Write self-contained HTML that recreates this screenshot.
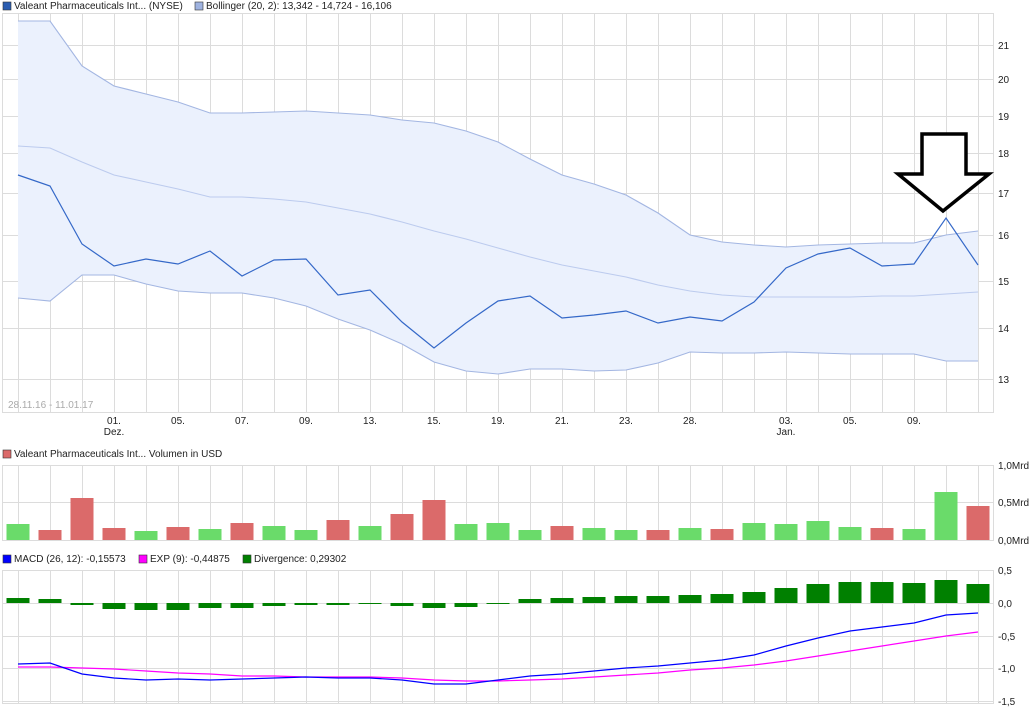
<!DOCTYPE html>
<html><head><meta charset="utf-8"><style>
html,body{margin:0;padding:0;background:#fff;width:1034px;height:712px;overflow:hidden}
svg{display:block;font-family:"Liberation Sans",sans-serif}
</style></head><body>
<svg id="s" width="1034" height="712" viewBox="0 0 1034 712" xmlns="http://www.w3.org/2000/svg">
<g font-size="10" fill="#222">
<rect x="3" y="2" width="8" height="8" fill="#2a5cb0" stroke="#333" stroke-width="0.6"/>
<text x="14" y="9">Valeant Pharmaceuticals Int... (NYSE)</text>
<rect x="195" y="2" width="8" height="8" fill="#9fb3e0" stroke="#333" stroke-width="0.6"/>
<text x="206" y="9">Bollinger (20, 2): 13,342 - 14,724 - 16,106</text>
<rect x="3" y="450" width="8" height="8" fill="#db6a6a" stroke="#333" stroke-width="0.6"/>
<text x="14" y="457">Valeant Pharmaceuticals Int... Volumen in USD</text>
<rect x="3" y="555" width="8" height="8" fill="#0000ff" stroke="#333" stroke-width="0.6"/>
<text x="14" y="562">MACD (26, 12): -0,15573</text>
<rect x="139" y="555" width="8" height="8" fill="#ff00ff" stroke="#333" stroke-width="0.6"/>
<text x="150" y="562">EXP (9): -0,44875</text>
<rect x="243" y="555" width="8" height="8" fill="#008000" stroke="#333" stroke-width="0.6"/>
<text x="254" y="562">Divergence: 0,29302</text>
</g>
<g id="grid" stroke="#dcdcdc" stroke-width="1" fill="none"></g>
<g id="data"></g>
<polygon points="922,134 966,134 966,174 989,174 943,211 898,174 922,174" fill="#fff" stroke="#000" stroke-width="3.5" stroke-linejoin="miter"/>
<text x="8" y="408" font-size="10" fill="#aaa">28.11.16 - 11.01.17</text>
<g id="lab" font-size="10" fill="#222"></g>
</svg>
<script>
const NS="http://www.w3.org/2000/svg";
function el(p,t,a,txt){const e=document.createElementNS(NS,t);for(const k in a)e.setAttribute(k,a[k]);if(txt!==undefined)e.textContent=txt;document.getElementById(p).appendChild(e);return e;}
const X=k=>18+32*k;
const panels=[[13,412],[465,540],[570,703]];
for(const [t,b] of panels){
 el('grid','rect',{x:2.5,y:t+0.5,width:991,height:b-t});
 for(let k=0;k<31;k++)el('grid','line',{x1:X(k)+.5,y1:t,x2:X(k)+.5,y2:b});
}
const py={21:45,20:79,19:116,18:153,17:193,16:235,15:281,14:328,13:379};
for(const p in py){el('grid','line',{x1:2,y1:py[p]+.5,x2:994,y2:py[p]+.5});el('lab','text',{x:998,y:py[p]+4},p);}
for(const [v,y] of [["1,0Mrd",465],["0,5Mrd",502],["0,0Mrd",540]]){el('grid','line',{x1:2,y1:y+.5,x2:994,y2:y+.5});el('lab','text',{x:998,y:y+4},v);}
for(const [v,y] of [["0,5",570],["0,0",603],["-0,5",636],["-1,0",668],["-1,5",701]]){el('grid','line',{x1:2,y1:y+.5,x2:994,y2:y+.5});el('lab','text',{x:998,y:y+4},v);}
const dl={3:"01.",5:"05.",7:"07.",9:"09.",11:"13.",13:"15.",15:"19.",17:"21.",19:"23.",21:"28.",24:"03.",26:"05.",28:"09."};
for(const k in dl){el('lab','text',{x:X(+k),y:424,'text-anchor':'middle'},dl[k]);}
el('lab','text',{x:X(3),y:435,'text-anchor':'middle'},"Dez.");
el('lab','text',{x:X(24),y:435,'text-anchor':'middle'},"Jan.");
const up=[21,21,66,86,94,102,113,113,112,111,113,115,120,123,131,142,159,175,184,195,213,235,242,245,247,245,244,243,243,235,231];
const mid=[146,148,162,175,182,189,197,197,199,202,208,214,222,231,239,248,257,265,271,277,285,291,295,297,297,297,297,296,296,294,292];
const lo=[298,301,275,275,284,291,293,293,298,306,319,330,344,362,371,374,369,369,371,370,363,352,353,353,352,353,354,354,354,361,361];
const pr=[175,186,244,266,259,264,251,276,260,259,295,290,322,348,323,301,296,318,315,311,323,317,321,302,268,254,248,266,264,218,265];
const pts=a=>a.map((y,k)=>X(k)+","+y).join(" ");
el('data','polygon',{points:pts(up)+" "+lo.map((y,k)=>X(k)+","+y).reverse().join(" "),fill:"#ebf1fd"});
el('data','polyline',{points:pts(up),fill:"none",stroke:"#a3b6e2","stroke-width":1.1});
el('data','polyline',{points:pts(mid),fill:"none",stroke:"#bccbee","stroke-width":1.1});
el('data','polyline',{points:pts(lo),fill:"none",stroke:"#a3b6e2","stroke-width":1.1});
el('data','polyline',{points:pts(pr),fill:"none",stroke:"#3468c8","stroke-width":1.2});
const vt=[524,530,498,528,531,527,529,523,526,530,520,526,514,500,524,523,530,526,528,530,530,528,529,523,524,521,527,528,529,492,506];
const vcol=['g','r','r','r','g','r','g','r','g','g','r','g','r','r','g','g','g','r','g','g','r','g','r','g','g','g','g','r','g','g','r'];
vt.forEach((y,k)=>el('data','rect',{x:X(k)-11.5,y:y,width:23,height:540-y,fill:vcol[k]=='g'?"#6adb6a":"#db6a6a"}));
const mb=[598,599,605,609,610,610,608,608,606,605,605,604,606,608,607,603.5,599,598,597,596,596,595,594,592,588,584,582,582,583,580,584];
mb.forEach((y,k)=>{const t=Math.min(y,603),h=Math.max(Math.abs(603-y),1);el('data','rect',{x:X(k)-11.5,y:t,width:23,height:h,fill:"#008000"});});
const mc=[664,663,674,678,680,679,680,679,678,677,678,678,680,684,684,680,676,674,671,668,666,663,660,655,646,638,631,627,623,615,613];
const ex=[667,667,668,669,671,673,674,676,676,677,677,677,678,680,681,681,680,679,677,675,673,670,668,665,661,656,651,646,641,636,632];
el('data','polyline',{points:pts(ex),fill:"none",stroke:"#ff00ff","stroke-width":1.2});
el('data','polyline',{points:pts(mc),fill:"none",stroke:"#0000ff","stroke-width":1.2});
</script>
</body></html>
